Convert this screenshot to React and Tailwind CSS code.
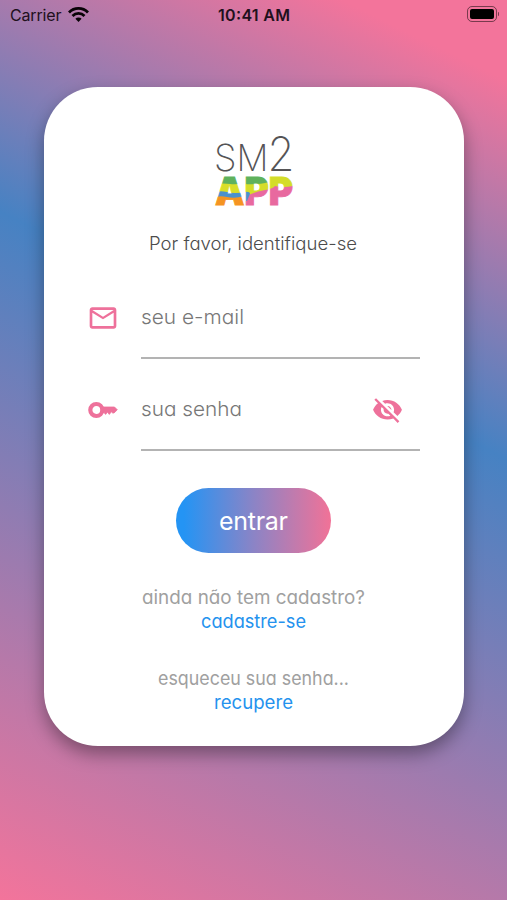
import { IoMdEyeOff } from 'react-icons/io';
import { MdMailOutline } from 'react-icons/md';

const StatusBar = () => {
    return (
        <header className="grid grid-cols-3 items-center h-[30px] pl-[10px] pr-2 text-[#21101c]">
            <div className="flex items-center gap-[6px]">
                <svg width="52" height="20" viewBox="0 0 52 20">
                    <text x="0" y="15.5" textLength="51.5" fontSize="16" fill="currentColor" fontFamily="Inter, sans-serif">Carrier</text>
                </svg>
                <svg className="-mt-[1px]" width="21" height="15" viewBox="0 0 21 15" fill="none" stroke="#080306" strokeWidth="2.8">
                    <path d="M1 5.4a13.4 13.4 0 0 1 19 0" />
                    <path d="M4.5 8.9a8.5 8.5 0 0 1 12 0" />
                    <path d="M10.5 15 7.4 11.8a4.4 4.4 0 0 1 6.2 0z" fill="#080306" stroke="none" />
                </svg>
            </div>
            <svg className="justify-self-center overflow-visible" width="73" height="20" viewBox="0 0 73 20">
                <text x="0" y="15.5" textLength="72" fontSize="16" fontWeight="600" fill="currentColor" fontFamily="Inter, sans-serif">10:41 AM</text>
            </svg>
            <div className="flex items-center gap-[1px] justify-self-end -mt-[2px]">
                <div className="w-[30px] h-4 p-[2px] border border-black/50 rounded-[5px]">
                    <div className="w-full h-full bg-black rounded-[2px]" />
                </div>
                <div className="w-[1.5px] h-1 bg-black/50 rounded-r-full" />
            </div>
        </header>
    );
};

const Logo = () => {
    return (
        <svg className="block overflow-visible shrink-0" width="80" height="74" viewBox="0 0 80 74">
            <defs>
                <pattern id="stripes" width="80" height="80" patternUnits="userSpaceOnUse">
                    <rect width="80" height="80" fill="#e8699f" />
                    <path d="M0 40h31v40H0z" fill="#f59422" />
                    <path d="M0 59q8-3 14 0t17 1v4q-9 3-17 1t-14 1z" fill="#4b91cd" />
                    <path d="M0 51h31v9q-9 2-17 0t-14 1z" fill="#d9de27" />
                    <path d="M0 40h31v11q-8 2-14 1t-17 0z" fill="#5fb15c" />
                    <path d="M31 40h49v14q-10 2-18 0-3 3-10 4t-14 4-7 5z" fill="#d4dd29" />
                    <path d="M31 40h25v10q-10 3-25 2z" fill="#5fb15c" />
                    <path d="M31 60q6-1 6 2l-3 7h-3z" fill="#4b91cd" />
                </pattern>
            </defs>
            <g fill="#555456" fontFamily="Inter, sans-serif" fontWeight="200">
                <text x="1" y="39" fontSize="37" textLength="22.5" lengthAdjust="spacingAndGlyphs">S</text>
                <text x="23.5" y="39" fontSize="37" textLength="32" lengthAdjust="spacingAndGlyphs">M</text>
                <text x="54.5" y="39" fontSize="48" textLength="27" lengthAdjust="spacingAndGlyphs">2</text>
            </g>
            <text
                x="2"
                y="73"
                fontSize="38"
                textLength="78"
                lengthAdjust="spacingAndGlyphs"
                fontFamily="Inter, sans-serif"
                fontWeight="900"
                fill="url(#stripes)"
                stroke="url(#stripes)"
                strokeWidth="0.9"
            >
                APP
            </text>
        </svg>
    );
};

// Rounded light lettering; cv11 is Inter's single-storey "a"
const Label = ({ children, width, size = 18.5, className = '' }) => {
    return (
        <svg className={`block overflow-visible ${className}`} width={width} height="24" viewBox={`0 0 ${width} 24`}>
            <text
                x="0"
                y="18"
                fontSize={size}
                textLength={width}
                lengthAdjust="spacingAndGlyphs"
                fill="currentColor"
                className="font-['Inter',sans-serif] [font-feature-settings:'cv11']"
            >
                {children}
            </text>
        </svg>
    );
};

const KeyIcon = () => {
    return (
        <svg width="30" height="18" viewBox="0 0 30 18" fill="none" stroke="currentColor">
            <circle cx="8.3" cy="9" r="6" strokeWidth="4.2" />
            <path d="M15 6h11.5L29.3 8.8 26 12h-1.3l-1.4-1.2-2 2.6-1.8-2.3-1.9 2.3-1.6-1.9H15z" fill="currentColor" strokeWidth="0.8" strokeLinejoin="round" />
        </svg>
    );
};

const Field = ({ icon, children, action }) => {
    return (
        <div className="flex h-[92px]">
            <div className="flex items-center justify-center w-[32px] h-[62px] mr-[22px] text-[#ee719b]">{icon}</div>
            <div className="w-[279px] h-[72px] border-b-2 border-[#b3b3b3]">
                <div className="flex items-center justify-between h-[62px] pr-[16px]">
                    {children}
                    {action}
                </div>
            </div>
        </div>
    );
};

const App = () => {
    return (
        <div className="w-full h-[900px] overflow-hidden bg-[linear-gradient(206deg,#f3749b_7%,#4682c3_40%,#f3749b_100%)]">
            <StatusBar />
            <main className="flex flex-col items-center w-[420px] h-[659px] mt-[57px] ml-[44px] pt-[45px] pr-[2px] bg-white rounded-[54px] shadow-[0_8px_18px_rgba(0,0,0,0.36)]">
                <Logo />
                <div className="mt-[26px]">
                    <Label width={208} size={18} className="text-[#4c4c4c] font-light">Por favor, identifique-se</Label>
                </div>

                <form className="w-[333px] mt-[31px]">
                    <Field icon={<MdMailOutline size={32} />}>
                        <Label width={103} size={20} className="text-[#777] font-light">seu e-mail</Label>
                    </Field>
                    <Field
                        icon={<KeyIcon />}
                        action={<IoMdEyeOff size={33} className="text-[#ee719b]" />}
                    >
                        <Label width={101} size={20} className="text-[#777] font-light">sua senha</Label>
                    </Field>
                </form>

                <button className="flex items-center justify-center shrink-0 w-[155px] h-[65px] mt-[17px] rounded-full bg-[linear-gradient(90deg,#2494f4_5%,#8b84c6_50%,#f17297_100%)] text-white">
                    <svg className="overflow-visible" width="69" height="30" viewBox="0 0 69 30">
                        <text x="0" y="23.5" fontSize="25" textLength="69" fill="currentColor" fontFamily="Inter, sans-serif">entrar</text>
                    </svg>
                </button>

                <div className="flex flex-col items-center mt-[33px]">
                    <Label width={223} className="text-[#a0a0a0]">ainda não tem cadastro?</Label>
                    <Label width={105} className="text-[#2492ee]">cadastre-se</Label>
                </div>
                <div className="flex flex-col items-center mt-[33px]">
                    <Label width={191} className="text-[#a0a0a0]">esqueceu sua senha...</Label>
                    <Label width={79} className="text-[#2492ee]">recupere</Label>
                </div>
            </main>
        </div>
    );
};

export default App;
